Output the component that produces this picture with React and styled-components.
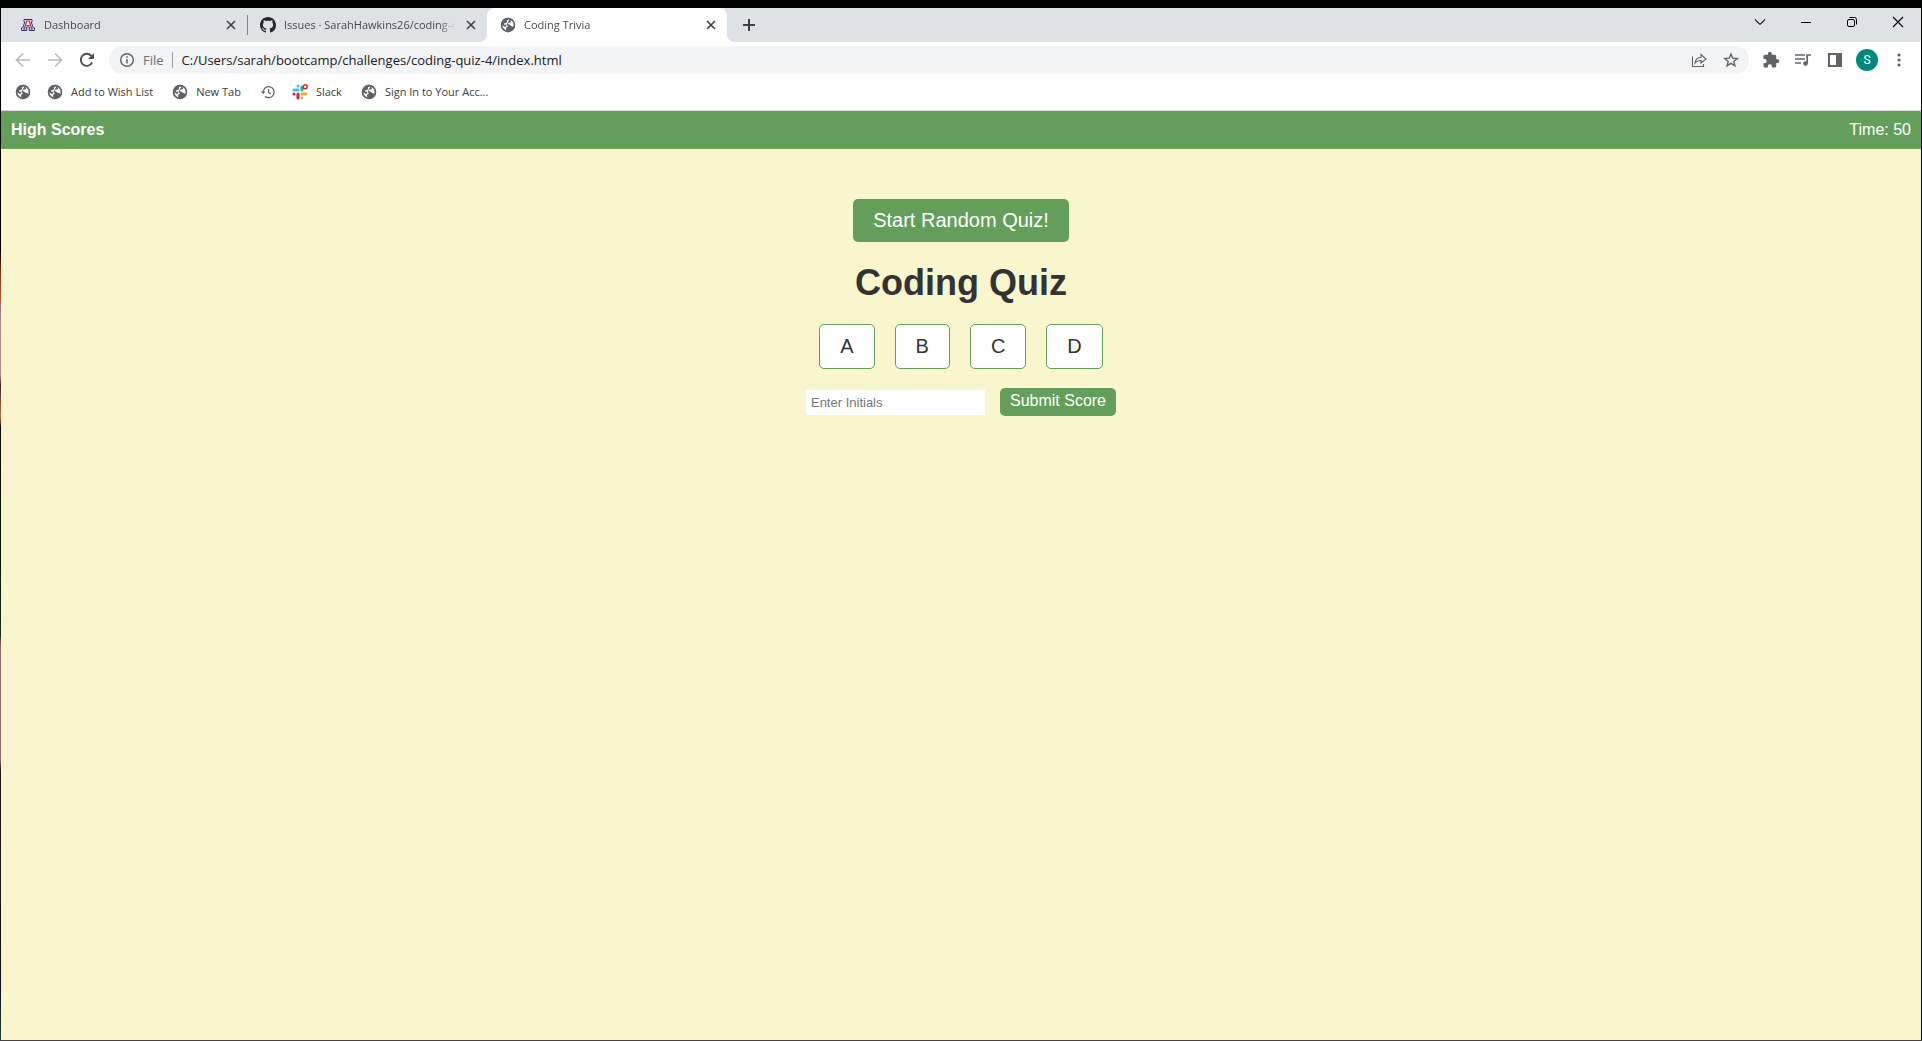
import React from "react";
import styled, { createGlobalStyle } from "styled-components";

const UI_FONT = '"Open Sans", "Noto Sans", sans-serif';
const PAGE_FONT = '"Liberation Sans", Arial, sans-serif';
const GREEN = "#639f5b";

const GlobalStyle = createGlobalStyle`
  *, *::before, *::after { box-sizing: border-box; }
  html, body, #root { height: 100%; margin: 0; }
  body { background: #000; }
  button, input { font: inherit; margin: 0; }
`;

const Desktop = styled.div`
  min-height: 100vh;
  display: flex;
  padding: 8px 1px 1px;
  background:
    linear-gradient(#46424a, #46424a) bottom / 100% 1px no-repeat,
    linear-gradient(
      #000 24%, #7a2c10 26%, #c0602a 29%, #8a7080 29%, #b08a90 31%, #b08a90 36%,
      #3a2a20 37%, #c07048 40%, #0c100a 41%, #0a140a 54%, #1c2c14 61%,
      #8a6a70 62%, #8a6a70 73%, #1a1616 74%, #101418 95%, #204038
    ) left / 1px 100% no-repeat,
    #000;
`;

const Window = styled.div`
  flex: 1;
  min-width: 0;
  display: flex;
  flex-direction: column;
  background: #fff;
`;

const TabStrip = styled.div`
  display: flex;
  height: 34px;
  padding-left: 6px;
  background: #dee1e6;
  font: 11px/16px ${UI_FONT};
  color: #45494d;
`;

const Tab = styled.div`
  position: relative;
  display: flex;
  align-items: center;
  width: 240px;
  padding: 0 8px 0 13px;
  gap: 8px;
  border-radius: 8px 8px 0 0;
  background: ${(p) => (p.$active ? "#fff" : "transparent")};

  &::before, &::after {
    content: ${(p) => (p.$active ? '""' : "none")};
    position: absolute;
    bottom: 0;
    width: 8px;
    height: 8px;
  }
  &::before {
    left: -8px;
    background: radial-gradient(circle at 0 0, transparent 8px, #fff 8px);
  }
  &::after {
    right: -8px;
    background: radial-gradient(circle at 100% 0, transparent 8px, #fff 8px);
  }
`;

const TabTitle = styled.span`
  flex: 1;
  overflow: hidden;
  white-space: nowrap;
  mask-image: linear-gradient(90deg, #000 calc(100% - 16px), transparent);
`;

const TabDivider = styled.span`
  align-self: center;
  width: 1px;
  height: 20px;
  margin: 0 -1px 0 0;
  background: #808387;
`;

const IconButton = styled.button`
  display: flex;
  align-items: center;
  justify-content: center;
  flex: none;
  width: ${(p) => p.$w || 32}px;
  height: ${(p) => p.$h || 28}px;
  padding: 0;
  border: 0;
  background: none;
`;

const WindowControls = styled.div`
  display: flex;
  margin-left: auto;
`;

const Toolbar = styled.div`
  display: flex;
  align-items: center;
  height: 36px;
  padding: 0 6px;
`;

const AddressBar = styled.div`
  flex: 1;
  display: flex;
  align-items: center;
  height: 28px;
  margin: 0 6px;
  padding: 0 2px 0 10px;
  border-radius: 14px;
  background: #f1f3f4;
  font: 13px/18px ${UI_FONT};
`;

const Scheme = styled.span`
  margin-left: 8px;
  padding-right: 8px;
  border-right: 1px solid #9aa0a6;
  line-height: 16px;
  color: #6b6f74;
`;

const UrlInput = styled.input`
  flex: 1;
  min-width: 0;
  padding: 0 0 0 9px;
  border: 0;
  outline: 0;
  background: none;
  color: #202124;
`;

const Avatar = styled.span`
  display: grid;
  place-items: center;
  width: 22px;
  height: 22px;
  border-radius: 50%;
  background: #00897b;
  color: #fff;
  font: 12px/22px Roboto, sans-serif;
`;

const Bookmarks = styled.nav`
  display: flex;
  align-items: center;
  gap: 16px;
  height: 33px;
  padding: 0 14px 4px;
  border-bottom: 1px solid #dadce0;
  font: 11px/16px ${UI_FONT};
`;

const Bookmark = styled.a`
  display: flex;
  align-items: center;
  gap: 8px;
  padding-right: ${(p) => (p.$labelled ? 3 : 0)}px;
  color: #3c4043;
  text-decoration: none;
  white-space: nowrap;
`;

const Page = styled.div`
  flex: 1;
  background: #f9f5cc;
  color: #333;
  font: 16px/18px ${PAGE_FONT};
`;

const PageHeader = styled.header`
  display: flex;
  justify-content: space-between;
  padding: 10px;
  background: ${GREEN};
  color: #fff;
`;

const ScoresLink = styled.a`
  color: #fff;
  font-weight: 700;
  text-decoration: none;
`;

const Main = styled.main`
  display: flex;
  flex-direction: column;
  align-items: center;
  padding-top: 50px;
`;

const PageButton = styled.button`
  padding: 0 20px 2px;
  border: 0;
  border-radius: 5px;
  background: ${GREEN};
  color: #fff;
`;

const StartButton = styled(PageButton)`
  height: 43px;
  font-size: 20px;
`;

const Title = styled.h1`
  margin: 20px 0;
  font-size: 36px;
  line-height: 42px;
`;

const Answers = styled.div`
  display: flex;
  gap: 20px;
`;

const AnswerButton = styled(PageButton)`
  height: 45px;
  border: 1px solid ${GREEN};
  background: #fff;
  color: #333;
  font-size: 20px;
`;

const ScoreForm = styled.form`
  display: flex;
  align-items: center;
  gap: 15px;
  margin-top: 19px;
`;

const InitialsInput = styled.input`
  width: 179px;
  height: 25px;
  padding: 0 5px;
  border: 0;
  font-size: 13px;
  &::placeholder { color: #757575; }
`;

const SubmitButton = styled(PageButton)`
  height: 28px;
  padding: 0 10px 2px;
`;

const Svg = ({ size = 16, box = 16, children, ...rest }) => (
  <svg width={size} height={size} viewBox={`0 0 ${box} ${box}`} fill="none" aria-hidden="true" {...rest}>
    {children}
  </svg>
);

const Globe = () => (
  <Svg>
    <circle cx="8" cy="8" r="7.2" fill="#5f6368" />
    <path d="M9.600 2.300C7.200 2.600 6.300 3.600 7 4.600c.4.700-.3 1.300-1.500 1.300-1.300 0-1.900.8-1.300 1.600.8.9 2.900.2 3.400 1.400.5 1.300-1.300 1-1.600 2.300-.1.900.2 1.700.6 2.300C4 12.900 2.300 10.700 2.300 8.200l3 2.100" fill="#fff" />
    <path d="M9.800 2.400c2.400.700 4 3 4 5.600 0 .8-.2 1.600-.5 2.300-.5-.9-1.200-1.300-2.100-1.300-1-.1-1-1.300-2.300-1.400-1.200-.2-1.300-1.600-.2-1.800 1.200-.3 2.400-.400 2.300-1.500-.1-.9-.8-1.300-1.200-1.900Z" fill="#fff" />
    <circle cx="8" cy="8" r="6.500" stroke="#5f6368" strokeWidth="1.400" />
  </Svg>
);

const Arizona = () => (
  <Svg>
    <path d="M4 2.500h8V5h-.8l2 6h1.300v2.500H9.300V11h.6l-.3-1H6.400l-.3 1h.6v2.500H1.500V11h1.300l2-6H4Z" fill="#fff" stroke="#1e3a72" />
    <path d="M5.500 4h5M6.800 4 4.200 12M9.200 4l2.600 8M6.200 8.500h3.600M3 12.200h2.500M10.500 12.200H13" stroke="#d02240" strokeWidth="1.200" />
  </Svg>
);

const GitHub = () => (
  <Svg>
    <path fill="#24292f" d="M8 0C3.580 0 0 3.580 0 8c0 3.540 2.290 6.530 5.470 7.590.4.070.55-.17.55-.38 0-.19-.01-.82-.01-1.490-2.010.37-2.530-.49-2.690-.94-.09-.23-.48-.94-.82-1.130-.28-.15-.68-.52-.01-.53.63-.01 1.080.58 1.230.82.72 1.210 1.870.87 2.330.66.07-.52.28-.87.51-1.070-1.780-.2-3.640-.89-3.640-3.950 0-.87.31-1.590.82-2.150-.08-.2-.36-1.020.08-2.120 0 0 .67-.21 2.200.82.64-.18 1.320-.27 2-.27s1.360.09 2 .27c1.530-1.040 2.200-.82 2.200-.82.44 1.100.16 1.920.08 2.120.51.56.82 1.270.82 2.150 0 3.070-1.870 3.750-3.650 3.950.29.25.54.73.54 1.480 0 1.070-.01 1.930-.01 2.200 0 .21.15.46.55.38A8.010 8.010 0 0 0 16 8c0-4.420-3.580-8-8-8Z" />
  </Svg>
);

const Slack = () => (
  <Svg>
    <g strokeWidth="3" strokeLinecap="round">
      <path d="M6 2v0M6 6H2" stroke="#36c5f0" />
      <path d="M10 3v3" stroke="#2eb67d" />
      <path d="M14 10h-4M10 14v0" stroke="#ecb22e" />
      <path d="M6 10v4M2 10v0" stroke="#e01e5a" />
    </g>
    <circle cx="13.200" cy="2.800" r="2" fill="#fff" stroke="#e01e2a" strokeWidth="1.400" />
  </Svg>
);

const HistoryIcon = () => (
  <Svg>
    <path d="M3.200 8A5.500 5.500 0 1 1 5 12.200" stroke="#5f6368" strokeWidth="1.300" />
    <path d="M8.600 5v3.400l2.400 1.500" stroke="#5f6368" strokeWidth="1.200" />
    <path d="M.8 7.500h4.800L3.200 10Z" fill="#5f6368" />
  </Svg>
);

const Close = () => (
  <Svg><path d="m4 4 8 8m0-8-8 8" stroke="#3c4043" strokeWidth="1.600" /></Svg>
);

const Arrow = ({ flip }) => (
  <Svg><path d={flip ? "M1 8h13M8 1.500 14.500 8 8 14.500" : "M15 8H2M8 1.500 1.500 8 8 14.500"} stroke="#babcbe" strokeWidth="1.700" /></Svg>
);

const tabs = [
  { title: "Dashboard", icon: Arizona },
  { title: "Issues · SarahHawkins26/coding-q", icon: GitHub },
  { title: "Coding Trivia", icon: Globe, active: true },
];

const bookmarks = [
  { label: "", icon: Globe },
  { label: "Add to Wish List", icon: Globe },
  { label: "New Tab", icon: Globe },
  { label: "", icon: HistoryIcon },
  { label: "Slack", icon: Slack },
  { label: "Sign In to Your Acc...", icon: Globe },
];

export default function App() {
  return (
    <Desktop>
      <GlobalStyle />
      <Window>
        <TabStrip>
          {tabs.map(({ title, icon: Icon, active }, i) => (
            <React.Fragment key={title}>
              <Tab $active={active}>
                <Icon />
                <TabTitle>{title}</TabTitle>
                <IconButton $w={16} $h={16} aria-label="Close tab"><Close /></IconButton>
              </Tab>
              {i === 0 && <TabDivider />}
            </React.Fragment>
          ))}
          <IconButton $w={44} $h={34} aria-label="New tab">
            <Svg><path d="M8 2v12M2 8h12" stroke="#3c4043" strokeWidth="2" /></Svg>
          </IconButton>
          <WindowControls>
            <IconButton $w={46} aria-label="Search tabs">
              <Svg><path d="m3 5.500 5 5 5-5" stroke="#222" strokeWidth="1.100" /></Svg>
            </IconButton>
            <IconButton $w={46} aria-label="Minimize">
              <Svg><path d="M3 8.500h10" stroke="#000" /></Svg>
            </IconButton>
            <IconButton $w={46} aria-label="Restore">
              <Svg><rect x="3.500" y="5.500" width="7" height="7" rx="1.500" stroke="#000" /><path d="M5.500 3.500H10.500a2 2 0 0 1 2 2v5" stroke="#000" /></Svg>
            </IconButton>
            <IconButton $w={46} aria-label="Close">
              <Svg><path d="m3 3 10 10m0-10L3 13" stroke="#000" strokeWidth="1.100" /></Svg>
            </IconButton>
          </WindowControls>
        </TabStrip>

        <Toolbar>
          <IconButton aria-label="Back"><Arrow /></IconButton>
          <IconButton aria-label="Forward"><Arrow flip /></IconButton>
          <IconButton aria-label="Reload">
            <Svg><path d="M13.200 10.500A6 6 0 1 1 12.300 3.800L14 5.500" stroke="#4f5358" strokeWidth="1.900" /><path d="M15 1v6H9Z" fill="#4f5358" /></Svg>
          </IconButton>
          <AddressBar>
            <Svg><circle cx="8" cy="8" r="6.300" stroke="#5f6368" strokeWidth="1.400" /><path d="M8 7v4.500M8 4.300v1.500" stroke="#5f6368" strokeWidth="1.500" /></Svg>
            <Scheme>File</Scheme>
            <UrlInput aria-label="Address" defaultValue="C:/Users/sarah/bootcamp/challenges/coding-quiz-4/index.html" />
            <IconButton aria-label="Share">
              <Svg><path d="M1.500 4.500v10h11v-2.500M4 11c.5-4 2.500-5.500 6-5.500V2.500L15 7l-5 4V8.500C7.500 8.500 5.500 9 4 11Z" stroke="#5f6368" strokeWidth="1.100" /></Svg>
            </IconButton>
            <IconButton aria-label="Bookmark this page">
              <Svg><path d="m8 2 1.700 4.200 4.600.3-3.500 2.900 1.100 4.400L8 11.400l-3.900 2.400 1.100-4.400L1.700 6.500l4.600-.3Z" stroke="#5f6368" strokeWidth="1.400" /></Svg>
            </IconButton>
          </AddressBar>
          <IconButton aria-label="Extensions">
            <Svg size={18} box={24}><path fill="#5f6368" d="M20.500 11H19V7a2 2 0 0 0-2-2h-4V3.500a2.500 2.500 0 0 0-5 0V5H4a2 2 0 0 0-2 2v3.800h1.500a2.700 2.700 0 0 1 0 5.400H2V20a2 2 0 0 0 2 2h3.800v-1.500a2.700 2.700 0 0 1 5.400 0V22H17a2 2 0 0 0 2-2v-4h1.500a2.500 2.500 0 0 0 0-5Z" /></Svg>
          </IconButton>
          <IconButton aria-label="Media controls">
            <Svg><path d="M0 3h10M0 7h10M0 11h6" stroke="#5f6368" strokeWidth="1.700" /><circle cx="10.500" cy="11.500" r="2.300" fill="#5f6368" /><path d="M12.200 11.500V3H16" stroke="#5f6368" strokeWidth="1.700" /></Svg>
          </IconButton>
          <IconButton aria-label="Side panel">
            <Svg><path fill="#5f6368" fillRule="evenodd" d="M1 1h14v14H1Zm2 2v10h6V3Z" /></Svg>
          </IconButton>
          <IconButton aria-label="Profile"><Avatar>S</Avatar></IconButton>
          <IconButton aria-label="Menu">
            <Svg><g fill="#5f6368"><circle cx="8" cy="3" r="1.600" /><circle cx="8" cy="8" r="1.600" /><circle cx="8" cy="13" r="1.600" /></g></Svg>
          </IconButton>
        </Toolbar>

        <Bookmarks aria-label="Bookmarks">
          {bookmarks.map(({ label, icon: Icon }, i) => (
            <Bookmark key={i} href="#" $labelled={Boolean(label)} aria-label={label || "Bookmark"}>
              <Icon />
              {label}
            </Bookmark>
          ))}
        </Bookmarks>

        <Page>
          <PageHeader>
            <ScoresLink href="#">High Scores</ScoresLink>
            <span>Time: 50</span>
          </PageHeader>
          <Main>
            <StartButton>Start Random Quiz!</StartButton>
            <Title>Coding Quiz</Title>
            <Answers>
              {["A", "B", "C", "D"].map((a) => <AnswerButton key={a}>{a}</AnswerButton>)}
            </Answers>
            <ScoreForm onSubmit={(e) => e.preventDefault()}>
              <InitialsInput aria-label="Enter Initials" placeholder="Enter Initials" />
              <SubmitButton>Submit Score</SubmitButton>
            </ScoreForm>
          </Main>
        </Page>
      </Window>
    </Desktop>
  );
}
